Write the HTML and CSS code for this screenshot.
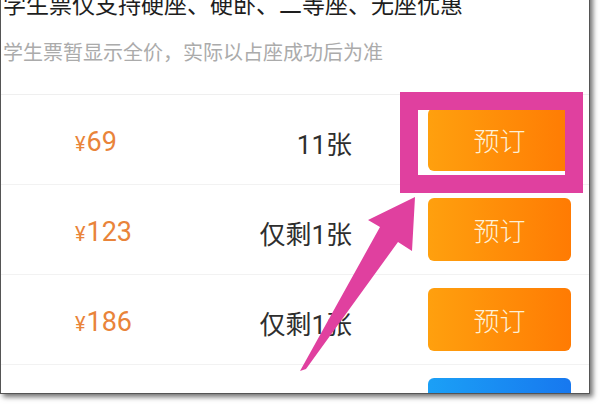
FILE: index.html
```html
<!DOCTYPE html>
<html lang="zh-CN">
<head>
<meta charset="utf-8">
<title>学生票</title>
<link rel="stylesheet" href="styles.css">
</head>
<body>
<div class="screen">
  <div class="notice">
    <p class="notice-main">学生票仅支持硬座、硬卧、二等座、无座优惠</p>
    <p class="notice-sub">学生票暂显示全价，实际以占座成功后为准</p>
  </div>
  <ul class="seats">
    <li class="seat-row">
      <span class="price"><span class="yen">¥</span>69</span>
      <span class="count">11张</span>
      <button class="book">预订</button>
    </li>
    <li class="seat-row">
      <span class="price"><span class="yen">¥</span>123</span>
      <span class="count">仅剩1张</span>
      <button class="book">预订</button>
    </li>
    <li class="seat-row">
      <span class="price"><span class="yen">¥</span>186</span>
      <span class="count">仅剩1张</span>
      <button class="book">预订</button>
    </li>
    <li class="seat-row">
      <span class="price"></span>
      <span class="count"></span>
      <button class="book book-blue" aria-label="预订"></button>
    </li>
  </ul>
  <div class="highlight"></div>
  <svg class="arrow" width="600" height="404" viewBox="0 0 600 404">
    <polygon points="415,197 412,251 398,242 306,369 300,371 380,227 368,220" fill="#e0409f"/>
  </svg>
</div>
</body>
</html>
```
FILE: styles.css
```css
html, body {
  margin: 0;
  padding: 0;
  background: #ffffff;
}

body {
  width: 600px;
  height: 404px;
  overflow: hidden;
  font-family: Roboto, "Noto Sans CJK SC", sans-serif;
}

.screen {
  position: relative;
  box-sizing: border-box;
  width: 590px;
  height: 414px;
  margin-top: -20px;
  background: #ffffff;
  border-left: 1px solid #555555;
  border-right: 1px solid #555555;
  border-bottom: 1px solid #555555;
  box-shadow: 3px 3px 5px rgba(0, 0, 0, 0.55);
  overflow: hidden;
}

.notice {
  padding: 6px 0 25px 2px;
}

.notice p {
  margin: 0;
  font-family: "Noto Sans CJK SC", sans-serif;
  line-height: 34px;
  white-space: nowrap;
}

.notice-main {
  font-size: 23px;
  color: #1e1e1e;
}

.notice-sub {
  margin-top: 15px !important;
  font-size: 20px;
  color: #ababab;
}

.seats {
  list-style: none;
  margin: 0;
  padding: 0;
  border-top: 1px solid #efefef;
}

.seat-row {
  display: grid;
  grid-template-columns: 1fr auto 143px;
  column-gap: 76px;
  align-items: center;
  height: 89px;
  padding: 0 18px 0 74px;
  border-bottom: 1px solid #f2f2f2;
}

.price {
  color: #e9843a;
  font-family: Roboto, sans-serif;
  font-size: 27px;
  padding-top: 5px;
}

.yen {
  font-size: 20px;
  margin-right: 1px;
}

.count {
  color: #2e2e2e;
  font-family: Roboto, "Noto Sans CJK SC", sans-serif;
  font-size: 26px;
  padding-top: 5px;
  text-align: right;
}

.book {
  height: 63px;
  border: none;
  border-radius: 6px;
  background: linear-gradient(to right, #ffa00e, #ff7b03);
  color: #fdf0d6;
  font-family: "Noto Sans CJK SC", sans-serif;
  font-size: 26px;
  font-weight: 300;
  padding: 0;
}

.book-blue {
  background: linear-gradient(to right, #1ba0f6, #1778ef);
}

.highlight {
  position: absolute;
  left: 399px;
  top: 112px;
  width: 183px;
  height: 101px;
  box-sizing: border-box;
  border: 18px solid #e0409f;
}

.arrow {
  position: absolute;
  left: -1px;
  top: 20px;
}
```
